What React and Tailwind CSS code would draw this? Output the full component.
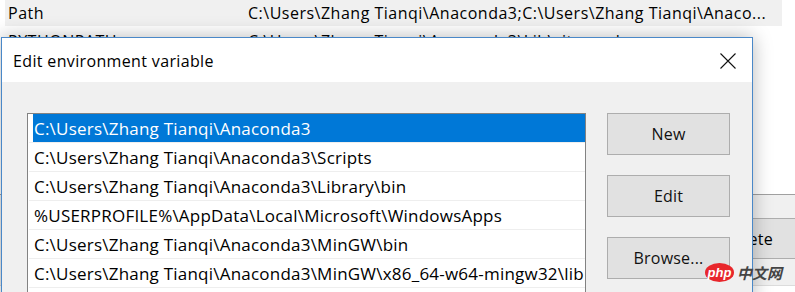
const ITEMS = [
  'C:\\Users\\Zhang Tianqi\\Anaconda3',
  'C:\\Users\\Zhang Tianqi\\Anaconda3\\Scripts',
  'C:\\Users\\Zhang Tianqi\\Anaconda3\\Library\\bin',
  '%USERPROFILE%\\AppData\\Local\\Microsoft\\WindowsApps',
  'C:\\Users\\Zhang Tianqi\\Anaconda3\\MinGW\\bin',
  'C:\\Users\\Zhang Tianqi\\Anaconda3\\MinGW\\x86_64-w64-mingw32\\lib',
];

function WinButton({ children }) {
  return (
    <button className="h-[42px] w-[123px] border border-[#adadad] bg-[#e1e1e1] text-[16px] tracking-[0.2px] text-[#111]">
      {children}
    </button>
  );
}

export default function App() {
  return (
    <div className="relative h-[292px] w-[795px] overflow-hidden bg-white font-['Segoe_UI','Open_Sans',sans-serif] text-[16px] text-black">
      {/* background window: Environment Variables */}
      <div className="flex h-full flex-col">
        <div className="ml-[5px] flex h-[26px] w-[777px] items-center bg-[#f0f0f0] pb-[1px] tracking-[0.5px]">
          <span className="w-[243px] pl-[3px]">Path</span>
          <span>C:\Users\Zhang Tianqi\Anaconda3;C:\Users\Zhang Tianqi\Anaco...</span>
        </div>
        {/* row hidden behind the dialog, only the tops of its letters show */}
        <div className="ml-[5px] flex h-[12px] items-start overflow-hidden pt-[4px] tracking-[0.5px]">
          <span className="w-[243px] pl-[3px] leading-[22px]">PYTHONPATH</span>
          <span className="leading-[22px]">C:\Users\Zhang Tianqi\Anaconda3\Lib\site-packages</span>
        </div>
        <div className="mt-[156px] border-t border-[#a0a0a0] bg-[#f0f0f0] pt-[23px]">
          <div className="flex justify-end">
            <button className="mr-[-3px] h-[41px] w-[100px] border border-[#adadad] bg-[#e1e1e1] text-[16px] tracking-[0.3px]">Delete</button>
          </div>
          <div className="mt-[26px] border-t border-[#dcdcdc]" />
        </div>
      </div>

      {/* dialog */}
      <div className="absolute left-[1px] top-[37px] h-[270px] w-[752px] border border-[#4a88c8] bg-[#f0f0f0] shadow-[0_0_18px_rgba(0,0,0,0.28)]">
        <div className="flex h-[44px] items-center justify-between bg-white pl-[11px] pr-[16px]">
          <span className="pt-[2px] tracking-[0.35px]">Edit environment variable</span>
          <svg width="16" height="16" viewBox="0 0 16 16" className="mt-[1px]">
            <path d="M0.5 0.5 L15.5 15.5 M15.5 0.5 L0.5 15.5" stroke="#111" strokeWidth="1.1" fill="none" />
          </svg>
        </div>
        <div className="flex gap-[21px] pl-[25px] pt-[31px]">
          <div className="h-[200px] w-[559px] overflow-hidden border border-[#828282] bg-white pl-[1px] text-[17px] tracking-[0.22px]">
            {ITEMS.map((item, i) => (
              <div key={item} className="h-[29px] border-b border-[#eeeeee]">
                <div
                  className={`ml-[4px] h-full pl-[1px] pt-[4px] leading-[22px] whitespace-nowrap ${
                    i === 0 ? 'bg-[#0078d7] text-white' : ''
                  }`}
                >
                  {item}
                </div>
              </div>
            ))}
          </div>
          <div className="flex flex-col gap-[20px]">
            <WinButton>New</WinButton>
            <WinButton>Edit</WinButton>
            <WinButton>Browse...</WinButton>
          </div>
        </div>
      </div>

      {/* watermark */}
      <div className="absolute left-[705px] top-[263px] flex items-center gap-[3px]">
        <span className="flex h-[19px] w-[29px] items-center justify-center rounded-[50%] bg-[#e8262b] font-['Liberation_Sans',sans-serif] text-[13px] font-bold italic leading-none text-white">
          php
        </span>
        <span className="font-['Noto_Sans_CJK_SC',sans-serif] text-[15px] font-bold italic leading-none text-[#444]">
          中文网
        </span>
      </div>
    </div>
  );
}
